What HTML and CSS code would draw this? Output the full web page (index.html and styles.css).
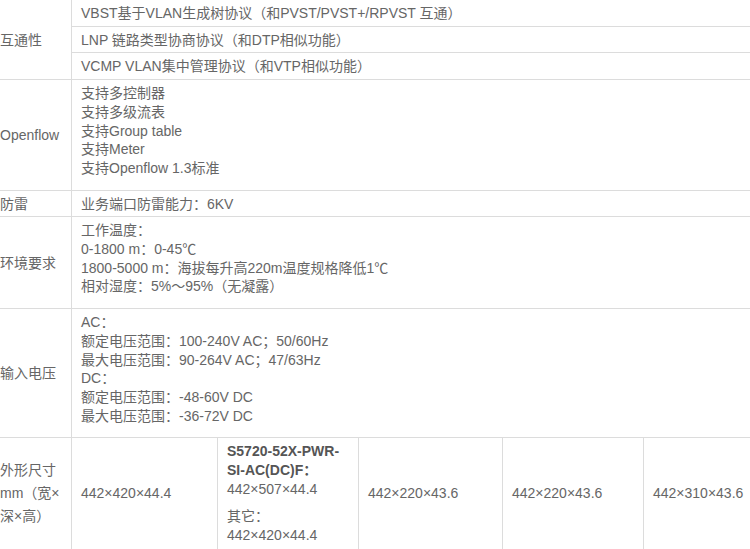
FILE: index.html
```html
<!DOCTYPE html>
<html lang="zh-CN">
<head>
    <meta charset="UTF-8">
    <meta name="viewport" content="width=device-width, initial-scale=1.0">
    <title>规格参数</title>
    <link rel="stylesheet" href="styles.css">
</head>
<body>
    <table class="spec-table">
        <colgroup>
            <col class="col-label">
            <col class="col-a">
            <col class="col-b">
            <col class="col-c">
            <col class="col-d">
            <col class="col-e">
        </colgroup>
        <tr>
            <td class="label" rowspan="3">互通性</td>
            <td colspan="5">VBST基于VLAN生成树协议（和PVST/PVST+/RPVST 互通）</td>
        </tr>
        <tr>
            <td colspan="5">LNP 链路类型协商协议（和DTP相似功能）</td>
        </tr>
        <tr>
            <td colspan="5">VCMP VLAN集中管理协议（和VTP相似功能）</td>
        </tr>
        <tr>
            <td class="label">Openflow</td>
            <td colspan="5">
                <p>支持多控制器<br>支持多级流表<br>支持Group table<br>支持Meter<br>支持Openflow 1.3标准</p>
            </td>
        </tr>
        <tr>
            <td class="label">防雷</td>
            <td colspan="5">业务端口防雷能力：6KV</td>
        </tr>
        <tr>
            <td class="label">环境要求</td>
            <td colspan="5">
                <p>工作温度：<br>0-1800 m：0-45℃<br>1800-5000 m：海拔每升高220m温度规格降低1℃<br>相对湿度：5%～95%（无凝露）</p>
            </td>
        </tr>
        <tr>
            <td class="label">输入电压</td>
            <td colspan="5">
                <p>AC：<br>额定电压范围：100-240V AC；50/60Hz<br>最大电压范围：90-264V AC；47/63Hz<br>DC：<br>额定电压范围：-48-60V DC<br>最大电压范围：-36-72V DC</p>
            </td>
        </tr>
        <tr>
            <td class="label"><p class="size-label">外形尺寸mm（宽×深×高）</p></td>
            <td><p>442×420×44.4</p></td>
            <td>
                <p><strong>S5720-52X-PWR-SI-AC(DC)F：</strong><br>442×507×44.4</p>
                <p>其它：<br>442×420×44.4</p>
            </td>
            <td><p>442×220×43.6</p></td>
            <td><p>442×220×43.6</p></td>
            <td><p>442×310×43.6</p></td>
        </tr>
    </table>
</body>
</html>
```

FILE: styles.css
```css
html, body {
    overflow: hidden;
}
body {
    margin: 0;
    background-color: #fff;
    font-family: "Liberation Sans", Arial, "Noto Sans CJK JP", "Noto Sans CJK SC", sans-serif;
    font-size: 14px;
    color: #666;
}
.spec-table {
    border-collapse: collapse;
    table-layout: fixed;
    width: 796px;
    margin: -1px 0 0 -10px;
}
.col-label { width: 81px; }
.col-a { width: 146px; }
.col-b { width: 141px; }
.col-c { width: 144px; }
.col-d { width: 141px; }
.col-e { width: 143px; }
.spec-table td {
    border: 1px solid #dcdcdc;
    padding: 4px 9px 3px;
    line-height: 18.7px;
    vertical-align: middle;
    text-align: left;
}
.spec-table p {
    margin: 0 0 9px;
}
.spec-table strong {
    color: #555;
}
.size-label {
    line-height: 23.3px;
}
```
